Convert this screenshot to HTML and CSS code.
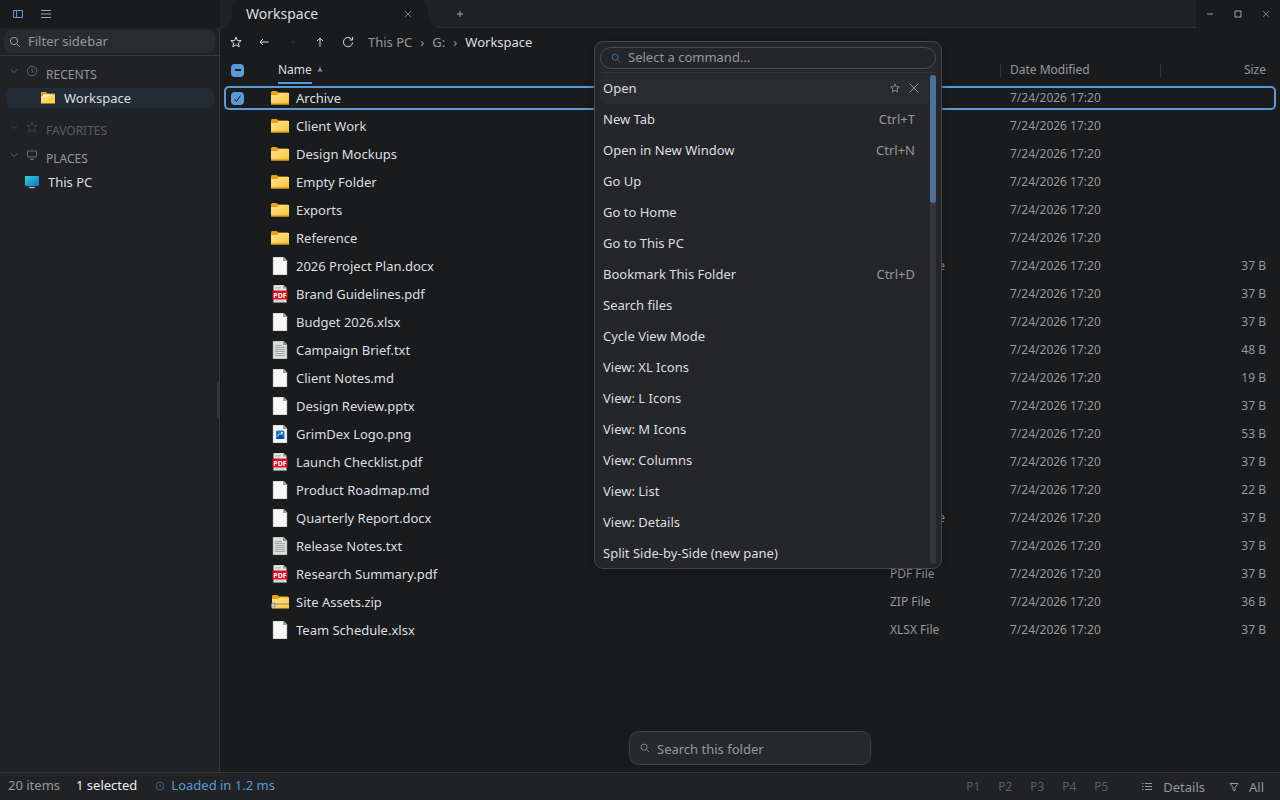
FILE: index.html
```
<!DOCTYPE html>
<html lang="en">
  <head>
    <meta charset="UTF-8" />
    <meta name="viewport" content="width=device-width, initial-scale=1.0" />
    <title>Workspace</title>
    <link rel="stylesheet" href="styles.css">
  </head>
  <body>
    <svg class="sprite" aria-hidden="true">
      <defs>
        <linearGradient id="folder-fill" x1="0" y1="0" x2="1" y2="1">
          <stop offset="0" stop-color="#ffe59a" />
          <stop offset="1" stop-color="#fdc52f" />
        </linearGradient>
        <linearGradient id="screen-fill" x1="0" y1="0" x2="1" y2="1">
          <stop offset="0" stop-color="#2fd0dc" />
          <stop offset="1" stop-color="#1273c4" />
        </linearGradient>
      </defs>
      <symbol id="search" viewBox="0 0 12 12">
        <circle cx="5" cy="5" r="3.6" /><path d="M7.7 7.7 11 11" />
      </symbol>
      <symbol id="chevron" viewBox="0 0 8 8"><path d="M1 2.5 4 5.5 7 2.5" /></symbol>
      <symbol id="clock" viewBox="0 0 12 12">
        <circle cx="6" cy="6" r="4.7" /><path d="M6 3.2V6.2L7.8 7.4" />
      </symbol>
      <symbol id="star" viewBox="0 0 12 12">
        <path d="M6 1 7.4 4.5 11.2 4.7 8.3 7.1 9.2 10.8 6 8.8 2.8 10.8 3.7 7.1.8 4.7 4.6 4.5Z" />
      </symbol>
      <symbol id="monitor" viewBox="0 0 12 12">
        <path d="M1.5 2h9v6h-9zM6 8v2.5M4 10.5h4" />
      </symbol>
      <symbol id="close" viewBox="0 0 12 12"><path d="M1.5 1.5 10.5 10.5M10.5 1.5 1.5 10.5" /></symbol>
      <symbol id="folder" viewBox="0 0 18 14">
        <path d="M0 1.5Q0 0 1.5 0H5.5L7.5 1.6H17V12H0Z" fill="#e9a10c" />
        <path d="M0 4H6L8 2H18V13.5H0.6Q0 13.5 0 13Z" fill="url(#folder-fill)" />
        <path d="M0 13H18" stroke="#c88a12" />
      </symbol>
      <symbol id="open-folder" viewBox="0 0 16 14">
        <path d="M1 1H6L7.5 2.6H15V12H1Z" fill="#e9a10c" />
        <path d="M3 3.5H13V9H3Z" fill="#fff6df" />
        <path d="M1 4.5 5 6.5 8 5 15 4V12.5H1Z" fill="url(#folder-fill)" />
      </symbol>
      <symbol id="zip" viewBox="0 0 18 15">
        <path d="M1 2Q1 .5 2 .5H6.5L8 2H17.5V13H1Z" fill="#e9a10c" />
        <path d="M1 4.5H6.5L8.5 3H18V14H1Z" fill="url(#folder-fill)" />
        <path d="M3 9.5H18" stroke="#a58a3c" stroke-width="1.6" />
        <path d="M4 9.5H18" stroke="#d6d0b4" stroke-width=".8" />
        <path d="M.8 8.5H3.8V14H1.5L.2 12.5Z" fill="#c6cacd" stroke="#63686c" stroke-width=".6" />
      </symbol>
      <symbol id="page" viewBox="0 0 16 18">
        <path d="M1 0H11.5L15 3.5V18H1Z" fill="#f8f8f8" stroke="#8b8d8f" stroke-width=".5" />
        <path d="M11 0V4H15Z" fill="#9a9c9e" />
      </symbol>
      <symbol id="text" viewBox="0 0 16 18">
        <path d="M1 0H11.5L15 3.5V18H1Z" fill="#dedfdf" stroke="#8b8d8f" stroke-width=".5" />
        <path d="M11 0V4H15Z" fill="#8d8f91" />
        <path d="M3 4.5H10M3 6.5H13M3 8.5H13M3 10.5H13M3 12.5H13M3 14.5H13" stroke="#929496" stroke-width=".8" />
      </symbol>
      <symbol id="image" viewBox="0 0 16 18">
        <path d="M1 0H11.5L15 3.5V18H1Z" fill="#f8f8f8" stroke="#8b8d8f" stroke-width=".5" />
        <path d="M11 0V4H15Z" fill="#9a9c9e" />
        <rect x="4" y="5.5" width="8.5" height="8.5" rx="1.5" fill="#1976d2" />
        <path d="M4 12.5 8 8.5 12.5 13Q12 14 11 14H5.5Q4 14 4 12.5Z" fill="#0b4fa4" />
        <path d="M4.5 12 8 8.5 9.5 10" stroke="#d7ecff" fill="none" />
        <circle cx="10" cy="7.7" r="1" fill="#fff" />
      </symbol>
      <symbol id="pdf" viewBox="0 0 16 18">
        <path d="M1.5 0H11.5L14.5 3V17.5H1.5Z" fill="#ececec" stroke="#8b8d8f" stroke-width=".5" />
        <path d="M11 0V3.5H14.5Z" fill="#9a9c9e" />
        <path d="M3 2.5H9M3 4H9M3 16H13" stroke="#a6a8aa" stroke-width=".7" />
        <rect x=".5" y="5.5" width="15" height="9" fill="#d8101c" />
        <text class="pdf-label" x="8" y="12.5">PDF</text>
      </symbol>
    </svg>

    <header class="titlebar">
      <div class="menu">
        <button aria-label="Toggle sidebar" class="accent">
          <svg class="i12" viewBox="0 0 12 12"><path d="M1.5 2.5h9v7h-9zM4.5 2.5v7" /></svg>
        </button>
        <button aria-label="Menu">
          <svg class="i12" viewBox="0 0 12 12"><path d="M1 2.5H11M1 6H11M1 9.5H11" /></svg>
        </button>
      </div>
      <div class="tabs">
        <div class="tab">
          <span>Workspace</span>
          <button aria-label="Close tab"><svg class="i8"><use href="#close" /></svg></button>
        </div>
        <button class="new-tab" aria-label="New tab">
          <svg class="i8" viewBox="0 0 8 8"><path d="M4 1V7M1 4H7" /></svg>
        </button>
      </div>
      <div class="window-controls">
        <button aria-label="Minimize"><svg class="i8" viewBox="0 0 8 8"><path d="M1 4H7" /></svg></button>
        <button aria-label="Maximize"><svg class="i8" viewBox="0 0 8 8"><path d="M1 1H7V7H1Z" /></svg></button>
        <button aria-label="Close"><svg class="i8"><use href="#close" /></svg></button>
      </div>
    </header>

    <main class="main">
      <aside class="sidebar">
        <div class="filter">
          <label>
            <svg class="i12"><use href="#search" /></svg>
            <input type="text" placeholder="Filter sidebar" aria-label="Filter sidebar" />
          </label>
        </div>
        <nav class="sections">
          <h2>
            <svg class="i8"><use href="#chevron" /></svg>
            <svg class="i12"><use href="#clock" /></svg>
            RECENTS
          </h2>
          <ul>
            <li class="recent">
              <a href="#"><svg class="place-icon"><use href="#open-folder" /></svg>Workspace</a>
            </li>
          </ul>
          <h2 class="empty">
            <svg class="i8"><use href="#chevron" /></svg>
            <svg class="i12"><use href="#star" /></svg>
            FAVORITES
          </h2>
          <h2>
            <svg class="i8"><use href="#chevron" /></svg>
            <svg class="i12"><use href="#monitor" /></svg>
            PLACES
          </h2>
          <ul>
            <li>
              <a href="#">
                <svg class="place-icon" viewBox="0 0 16 14">
                  <rect x="1" y="1" width="14" height="10" rx=".5" fill="url(#screen-fill)" />
                  <path d="M5 12.5H11" stroke="#aeb4b8" stroke-width="1.4" />
                </svg>This PC</a>
            </li>
          </ul>
        </nav>
        <div class="grip"></div>
      </aside>

      <section class="pane">
        <div class="toolbar">
          <button aria-label="Add to favorites"><svg class="i12"><use href="#star" /></svg></button>
          <button aria-label="Back">
            <svg class="i12" viewBox="0 0 12 12"><path d="M10.5 6H2M5 3 2 6 5 9" /></svg>
          </button>
          <button aria-label="Forward" disabled>
            <svg class="i12" viewBox="0 0 12 12"><path d="M3.5 6H9M6.5 3.5 9 6 6.5 8.5" /></svg>
          </button>
          <button aria-label="Up">
            <svg class="i12" viewBox="0 0 12 12"><path d="M6 10.5V2M3 5 6 2 9 5" /></svg>
          </button>
          <button aria-label="Refresh">
            <svg class="i12" viewBox="0 0 12 12"><path d="M10.6 6.5A4.6 4.6 0 1 1 9.6 3.2M10.6 1V4H7.6" /></svg>
          </button>
          <nav class="breadcrumb">
            <a href="#">This PC</a><span>›</span><a href="#">G:</a><span>›</span><a href="#" class="current">Workspace</a>
          </nav>
        </div>

        <div class="list">
          <table>
            <thead>
              <tr>
                <th class="check"><input type="checkbox" class="some" aria-label="Select all" /></th>
                <th class="name"><button>Name</button><svg class="sort" viewBox="0 0 6 6"><path d="M3 1 5.5 5.5H.5Z" /></svg></th>
                <th class="type">Type</th>
                <th class="date">Date Modified</th>
                <th class="size">Size</th>
              </tr>
            </thead>
            <tbody id="files"></tbody>
          </table>
        </div>

        <label class="search">
          <svg class="i10"><use href="#search" /></svg>
          <input type="text" placeholder="Search this folder" aria-label="Search this folder" />
        </label>

        <div class="palette" role="dialog" aria-label="Commands">
          <label>
            <svg class="i10"><use href="#search" /></svg>
            <input type="text" placeholder="Select a command..." aria-label="Select a command" />
          </label>
          <div class="palette-body">
            <ul id="commands"></ul>
            <div class="track"><div class="thumb"></div></div>
          </div>
        </div>
      </section>
    </main>

    <footer class="statusbar">
      <div class="summary">
        <span>20 items</span>
        <span class="selected-count">1 selected</span>
        <span class="loaded"><svg class="i10"><use href="#clock" /></svg>Loaded in 1.2 ms</span>
      </div>
      <div class="panes">
        <button>P1</button><button>P2</button><button>P3</button><button>P4</button><button>P5</button>
      </div>
      <button class="view">
        <svg class="i12" viewBox="0 0 12 12"><path d="M1 2.5H2.5M1 5.5H2.5M1 8.5H2.5M4 2.5H11M4 5.5H11M4 8.5H11" /></svg>Details
      </button>
      <button class="view">
        <svg class="i10" viewBox="0 0 10 10"><path d="M1 1.5H9L6 5.3V8.8L4 7.8V5.3Z" /></svg>All
      </button>
    </footer>

    <script>
      const files = [
        ["folder", "Archive", "Folder", ""],
        ["folder", "Client Work", "Folder", ""],
        ["folder", "Design Mockups", "Folder", ""],
        ["folder", "Empty Folder", "Folder", ""],
        ["folder", "Exports", "Folder", ""],
        ["folder", "Reference", "Folder", ""],
        ["page", "2026 Project Plan.docx", "DOCX File", "37 B"],
        ["pdf", "Brand Guidelines.pdf", "PDF File", "37 B"],
        ["page", "Budget 2026.xlsx", "XLSX File", "37 B"],
        ["text", "Campaign Brief.txt", "TXT File", "48 B"],
        ["page", "Client Notes.md", "MD File", "19 B"],
        ["page", "Design Review.pptx", "PPTX File", "37 B"],
        ["image", "GrimDex Logo.png", "PNG File", "53 B"],
        ["pdf", "Launch Checklist.pdf", "PDF File", "37 B"],
        ["page", "Product Roadmap.md", "MD File", "22 B"],
        ["page", "Quarterly Report.docx", "DOCX File", "37 B"],
        ["text", "Release Notes.txt", "TXT File", "37 B"],
        ["pdf", "Research Summary.pdf", "PDF File", "37 B"],
        ["zip", "Site Assets.zip", "ZIP File", "36 B"],
        ["page", "Team Schedule.xlsx", "XLSX File", "37 B"],
      ];

      document.getElementById("files").innerHTML = files
        .map(([icon, name, type, size], i) => {
          const check = i === 0
            ? `<input type="checkbox" checked aria-label="Select ${name}" />`
            : "";
          return `<tr class="${i === 0 ? "selected" : ""}">
            <td class="check">${check}</td>
            <td class="name"><div><svg class="file-icon"><use href="#${icon}" /></svg>${name}</div></td>
            <td class="type">${type}</td>
            <td class="date">7/24/2026 17:20</td>
            <td class="size">${size}</td>
          </tr>`;
        })
        .join("");

      const commands = [
        ["Open", ""],
        ["New Tab", "Ctrl+T"],
        ["Open in New Window", "Ctrl+N"],
        ["Go Up", ""],
        ["Go to Home", ""],
        ["Go to This PC", ""],
        ["Bookmark This Folder", "Ctrl+D"],
        ["Search files", ""],
        ["Cycle View Mode", ""],
        ["View: XL Icons", ""],
        ["View: L Icons", ""],
        ["View: M Icons", ""],
        ["View: Columns", ""],
        ["View: List", ""],
        ["View: Details", ""],
        ["Split Side-by-Side (new pane)", ""],
      ];

      document.getElementById("commands").innerHTML = commands
        .map(([label, keys], i) => {
          const actions = i === 0
            ? `<button class="action" aria-label="Pin"><svg class="i10"><use href="#star" /></svg></button>
               <button class="action" aria-label="Remove"><svg class="i12"><use href="#close" /></svg></button>`
            : `<kbd>${keys}</kbd>`;
          return `<li class="${i === 0 ? "active" : ""}"><button class="command">${label}</button>${actions}</li>`;
        })
        .join("");
    </script>
  </body>
</html>
```
FILE: styles.css
```
* {
  box-sizing: border-box;
}

body {
  margin: 0;
  height: 100vh;
  display: flex;
  flex-direction: column;
  overflow: hidden;
  background: #191b1d;
  color: #dcdfe1;
  font-family: "Noto Sans", "Open Sans", sans-serif;
  font-size: 13px;
  line-height: 20px;
}

button,
input {
  font: inherit;
  color: inherit;
  background: none;
  border: 0;
  padding: 0;
  margin: 0;
}

input[type="text"] {
  flex: 1;
  min-width: 0;
  outline: none;
}

input::placeholder {
  color: #96999c;
  opacity: 1;
}

a {
  color: inherit;
  text-decoration: none;
}

ul {
  list-style: none;
  margin: 0;
  padding: 0;
}

svg {
  flex: none;
  fill: none;
  stroke: currentColor;
  stroke-width: 1;
}

.sprite {
  position: absolute;
  width: 0;
  height: 0;
  visibility: hidden;
}

.i8 {
  width: 8px;
  height: 8px;
}

.i10 {
  width: 10px;
  height: 10px;
}

.i12 {
  width: 12px;
  height: 12px;
}

/* title bar */
.titlebar {
  display: flex;
  height: 28px;
  color: #a3a6a9;
}

.titlebar button,
.toolbar button {
  display: flex;
  align-items: center;
  justify-content: center;
  width: 28px;
  height: 28px;
}

.menu {
  display: flex;
  width: 220px;
  padding-left: 4px;
}

.menu .accent {
  color: #5b9bd5;
}

.tabs {
  flex: 1;
  display: flex;
  padding-left: 12px;
  background: #202225;
  border-bottom: 1px solid #303235;
}

.tab {
  position: relative;
  display: flex;
  align-items: center;
  justify-content: space-between;
  width: 196px;
  height: 28px;
  padding: 0 6px 0 14px;
  border-radius: 8px 8px 0 0;
  background: #191b1d;
  color: #dcdfe1;
  font-size: 14px;
}

.tab button {
  color: #a3a6a9;
}

/* curved feet of the active tab */
.tab::before,
.tab::after {
  content: "";
  position: absolute;
  bottom: 0;
  width: 12px;
  height: 12px;
}

.tab::before {
  right: 100%;
  background: radial-gradient(circle at 0 0, transparent 12px, #191b1d 12px);
}

.tab::after {
  left: 100%;
  background: radial-gradient(circle at 100% 0, transparent 12px, #191b1d 12px);
}

.titlebar .new-tab {
  margin-left: 18px;
}

.window-controls {
  display: flex;
}

/* sidebar */
.main {
  flex: 1;
  display: flex;
  min-height: 0;
}

.sidebar {
  position: relative;
  width: 220px;
  background: #202225;
  border-right: 1px solid #35373a;
}

.filter {
  height: 28px;
  padding: 2px 4px;
  border-bottom: 1px solid #35373a;
}

.filter label {
  display: flex;
  align-items: center;
  gap: 7px;
  height: 23px;
  padding: 0 5px;
  border-radius: 8px;
  background: #292b2f;
  color: #96999c;
}

.filter input {
  margin-bottom: 2px;
}

.sections {
  padding: 4px 5px 0 6px;
}

.sections h2 {
  display: flex;
  align-items: center;
  gap: 8px;
  height: 28px;
  margin: 0;
  padding: 2px 0 0 4px;
  color: #96999c;
  font-size: 12px;
  font-weight: 400;
}

.sections h2 svg {
  margin-bottom: 9px;
  opacity: 0.6;
}

.sections h2.empty {
  color: #5b5e61;
}

.sections ul {
  margin-bottom: 8px;
}

.sections a {
  display: flex;
  align-items: center;
  gap: 8px;
  height: 20px;
  padding-left: 18px;
  border-radius: 6px;
}

.sections .recent a {
  padding-left: 34px;
  background: #222c36;
}

.place-icon {
  width: 16px;
  height: 14px;
  stroke: none;
}

.grip {
  position: absolute;
  right: 0;
  top: 354px;
  width: 2px;
  height: 36px;
  background: #35373a;
}

/* file pane */
.pane {
  position: relative;
  flex: 1;
  min-width: 0;
  display: flex;
  flex-direction: column;
}

.toolbar {
  display: flex;
  align-items: center;
  height: 26px;
  padding: 2px 2px 0;
}

.toolbar button:disabled {
  color: #2c2e31;
}

.breadcrumb {
  display: flex;
  gap: 8px;
  padding-left: 6px;
  color: #96999c;
}

.breadcrumb .current {
  color: #dcdfe1;
}

.list {
  flex: 1;
  min-height: 0;
  padding: 0 4px;
  overflow: hidden;
}

table {
  width: 100%;
  table-layout: fixed;
  border-collapse: separate;
  border-spacing: 0 4px;
}

th,
td {
  height: 24px;
  padding: 0;
  border: solid transparent;
  border-width: 2px 0;
  color: #96999c;
  font-size: 12px;
  font-weight: 400;
  line-height: 20px;
  text-align: left;
  vertical-align: middle;
  white-space: nowrap;
}

th.check,
td.check {
  width: 47px;
  padding-left: 5px;
  border-left-width: 2px;
}

.type {
  width: 110px;
}

.date {
  width: 160px;
}

th.size,
td.size {
  width: 116px;
  padding-right: 8px;
  border-right-width: 2px;
  text-align: right;
}

th.date,
th.size {
  background: linear-gradient(#303235, #303235) 0 4px / 1px 14px no-repeat;
}

td.date,
th.date {
  padding-left: 10px;
}

th.name {
  padding-left: 7px;
  color: #dcdfe1;
}

th.name button {
  position: relative;
}

th.name button::after {
  content: "";
  position: absolute;
  left: 0;
  right: 0;
  bottom: -4px;
  height: 2px;
  background: #5b9bd5;
}

.sort {
  width: 6px;
  height: 6px;
  margin: 0 0 2px 5px;
  fill: #5b9bd5;
  stroke: none;
}

td.name {
  color: #dcdfe1;
  font-size: 13px;
}

td.name div {
  display: flex;
  align-items: center;
  gap: 7px;
}

.file-icon {
  width: 18px;
  height: 18px;
  stroke: none;
}

.pdf-label {
  fill: #fff;
  font: 700 7px "Noto Sans", sans-serif;
  text-anchor: middle;
}

.selected td {
  border-color: #5b9bd5;
}

.selected td:first-child {
  border-radius: 5px 0 0 5px;
}

.selected td:last-child {
  border-radius: 0 5px 5px 0;
}

input[type="checkbox"] {
  appearance: none;
  display: block;
  width: 13px;
  height: 13px;
  border-radius: 4px;
  background: #5b9bd5 center no-repeat;
}

input[type="checkbox"]:checked {
  background-image: url("data:image/svg+xml,%3Csvg xmlns='http://www.w3.org/2000/svg' width='13' height='13'%3E%3Cpath d='M3.5 7 5.5 9.5 9.5 3.5' fill='none' stroke='%23191b1d'/%3E%3C/svg%3E");
}

input[type="checkbox"].some {
  background-image: linear-gradient(#191b1d, #191b1d);
  background-size: 6px 2px;
}

.search {
  display: flex;
  align-items: center;
  gap: 7px;
  width: 242px;
  height: 34px;
  margin: 0 auto 7px;
  padding: 0 10px;
  border: 1px solid #404245;
  border-radius: 10px;
  background: #26282b;
  color: #96999c;
}

.search input {
  margin-top: 2px;
}

/* command palette */
.palette {
  position: absolute;
  top: 13px;
  right: 338px;
  width: 348px;
  padding: 5px 5px 4px;
  border: 1px solid #44464a;
  border-radius: 9px;
  background: #252629;
  box-shadow: 0 2px 8px rgba(0, 0, 0, 0.3);
}

.palette label {
  display: flex;
  align-items: center;
  gap: 7px;
  height: 22px;
  padding: 0 10px;
  border: 1px solid #4a4c50;
  border-radius: 11px;
}

.palette label svg {
  color: #4c7dab;
}

.palette label input {
  margin-bottom: 2px;
}

.palette-body {
  display: flex;
  max-height: 492px;
  margin-top: 3px;
  border-top: 1px solid #323437;
  overflow: hidden;
}

.palette ul {
  flex: 1;
}

.palette li {
  display: flex;
  align-items: center;
  height: 31px;
  padding: 0 15px 2px 3px;
  border-radius: 6px;
}

.palette li.active {
  gap: 8px;
  padding-right: 10px;
  background: #2a2b2f;
}

.command {
  flex: 1;
  text-align: left;
}

.action {
  display: flex;
  color: #96999c;
}

kbd {
  color: #96999c;
  font: inherit;
}

.track {
  width: 6px;
  margin-top: 2px;
  border-radius: 3px;
  background: #35373a;
}

.thumb {
  height: 128px;
  border-radius: 3px;
  background: #4a7198;
}

/* status bar */
.statusbar {
  display: flex;
  align-items: center;
  height: 28px;
  padding: 0 16px 0 8px;
  border-top: 1px solid #35373a;
  background: #202225;
  color: #96999c;
}

.summary {
  display: flex;
  gap: 16px;
  margin-bottom: 4px;
}

.selected-count {
  color: #eceeef;
}

.loaded {
  display: flex;
  align-items: center;
  gap: 6px;
  padding-left: 2px;
  color: #5b9bd5;
}

.loaded svg {
  margin-top: 3px;
  opacity: 0.6;
}

.panes {
  display: flex;
  margin-left: auto;
  margin-right: 24px;
  color: #5b5e61;
  font-size: 12px;
}

.panes button {
  width: 32px;
}

.view {
  display: flex;
  align-items: center;
  gap: 10px;
}

.view + .view {
  margin-left: 24px;
}
```
